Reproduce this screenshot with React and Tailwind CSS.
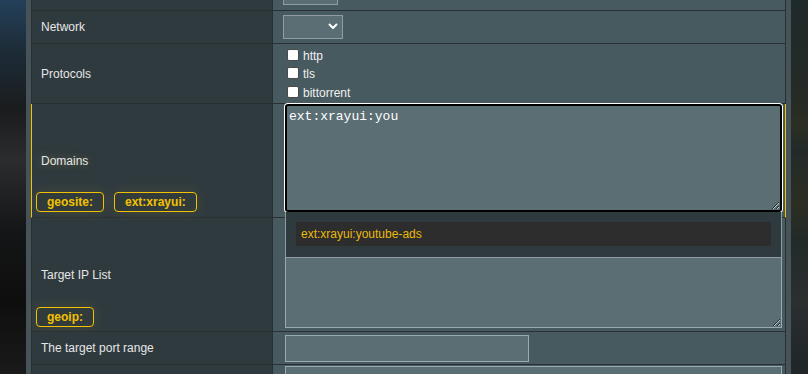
import React from "react";

const font = { fontFamily: '"Liberation Sans", Arial, sans-serif' };

function Chevron() {
  return (
    <svg width="10" height="7" viewBox="0 0 10 7" className="text-white">
      <path d="M1.5 1.5 L5 5 L8.5 1.5" fill="none" stroke="currentColor" strokeWidth="2" strokeLinecap="round" strokeLinejoin="round" />
    </svg>
  );
}

function TagButton({ children }) {
  return (
    <button className="h-[20px] px-[10px] rounded-[4px] border border-[#f2c200] text-[#f2c200] font-bold text-[12px] leading-none bg-[#323b3c] shadow-[0_0_14px_rgba(240,200,0,0.12)]">
      {children}
    </button>
  );
}

function Row({ label, labelExtra, children, className = "", valueClass = "" }) {
  return (
    <div className={`flex border-b border-[#2a2f31] ${className}`}>
      <div className="w-[241px] shrink-0 bg-[#2f3a3f] border-r border-[#2a2f31] text-[12px] text-[#e6e6e6]">
        {labelExtra ? labelExtra : <div className="h-full flex items-center pl-[9px]">{label}</div>}
      </div>
      <div className={`flex-1 bg-[#475a60] ${valueClass}`}>{children}</div>
    </div>
  );
}

export default function App() {
  return (
    <div className="w-[808px] h-[374px] overflow-hidden flex bg-[#161819]" style={font}>
      {/* left background */}
      <div className="w-[26px] shrink-0 bg-[linear-gradient(180deg,#24405a_0px,#1d2c38_50px,#1a1c1d_110px,#2a2c2d_160px,#151617_230px,#0e0e0e_300px,#1a1a1a_374px)]" />
      {/* panel */}
      <div className="w-[765px] shrink-0 bg-[#465459] px-[5px]">
        <div className="flex flex-col border-l border-r border-[#2a2f31]">
          {/* partial top row */}
          <Row label="" labelExtra={<div />} className="h-[11px]" valueClass="pl-[10px]">
            <div className="w-[55px] h-[5px] bg-[#5a6e74] border-b border-x border-[#8d9da2]" />
          </Row>
          <Row label="Network" className="h-[33px]" valueClass="flex items-center pl-[10px]">
            <div className="w-[60px] h-[24px] mt-[-1px] bg-[#5a6e74] border border-[#8d9da2] flex items-center justify-end pr-[4px]">
              <Chevron />
            </div>
          </Row>
          <Row label="Protocols" className="h-[60px]" valueClass="pl-[14px] pt-[4px] flex flex-col text-[12px] text-[#f0f0f0]">
            {["http", "tls", "bittorrent"].map((p) => (
              <label key={p} className="flex items-start h-[18.5px] gap-[4px]">
                <span className="shrink-0 mt-[1px] w-[12px] h-[12px] bg-white rounded-[2px] border border-[#4a4a4a]" />
                <span className="mt-[1px] leading-[14px]">{p}</span>
              </label>
            ))}
          </Row>
          <div className="flex border-b border-[#2a2f31] h-[114px] relative z-10 -mx-px border-x border-x-[#f2c200]">
            <div className="w-[241px] shrink-0 bg-[#2f3a3f] border-r border-[#2a2f31] text-[12px] text-[#e6e6e6] flex flex-col">
              <div className="h-[25px]" />
              <div className="flex-1 flex items-center pl-[9px] [text-shadow:0_0_10px_rgba(230,200,60,0.35)]">Domains</div>
              <div className="flex gap-[10px] pl-[4px] pb-[5px]">
                <TagButton>geosite:</TagButton>
                <TagButton>ext:xrayui:</TagButton>
              </div>
            </div>
            <div className="flex-1 bg-[#475a60] relative pl-[12px]">
              <textarea
                defaultValue="ext:xrayui:you"
                className="block w-[497px] h-[108px] bg-[#5a6e74] border-2 border-black rounded-[3px] shadow-[0_0_0_1px_#ffffff] outline-none text-white text-[13px] leading-[16px] px-[2px] pt-[3px]"
                style={{ fontFamily: '"Liberation Mono", "Courier New", monospace' }}
              />
              <div className="absolute left-[12px] top-[108px] w-[497px] h-[46px] bg-[#2f3a3f] border border-t-0 border-[#8d9da2] pt-[10px] px-[10px]">
                <div className="h-[24px] bg-[#2d2d2d] flex items-center pl-[5px] text-[12px] text-[#e8b90c]">
                  ext:xrayui:youtube-ads
                </div>
              </div>
            </div>
          </div>
          <div className="flex border-b border-[#2a2f31] h-[114px]">
            <div className="w-[241px] shrink-0 bg-[#2f3a3f] border-r border-[#2a2f31] text-[12px] text-[#e6e6e6] flex flex-col">
              <div className="h-[25px]" />
              <div className="flex-1 flex items-center pl-[9px]">Target IP List</div>
              <div className="flex gap-[10px] pl-[4px] pb-[4px]">
                <TagButton>geoip:</TagButton>
              </div>
            </div>
            <div className="flex-1 bg-[#475a60] pl-[12px] pt-[4px]">
              <textarea className="block w-[497px] h-[106px] bg-[#5a6e74] border border-[#9aa9ad] outline-none" />
            </div>
          </div>
          <Row label="The target port range" className="h-[33px]" valueClass="flex items-center pl-[12px]">
            <div className="w-[244px] h-[27px] bg-[#5a6e74] border border-[#9aa9ad]" />
          </Row>
          <Row label="" labelExtra={<div />} className="h-[20px]" valueClass="pl-[12px] pt-[1px]">
            <div className="w-[497px] h-[30px] bg-[#5a6e74] border border-[#9aa9ad]" />
          </Row>
        </div>
      </div>
      {/* right background */}
      <div className="flex-1 bg-[linear-gradient(180deg,#1f2a2b_0px,#252b25_100px,#2b2e22_125px,#222a29_150px,#2c2e22_205px,#222a29_240px,#2a2f30_300px,#1f2627_374px)]" />
    </div>
  );
}
